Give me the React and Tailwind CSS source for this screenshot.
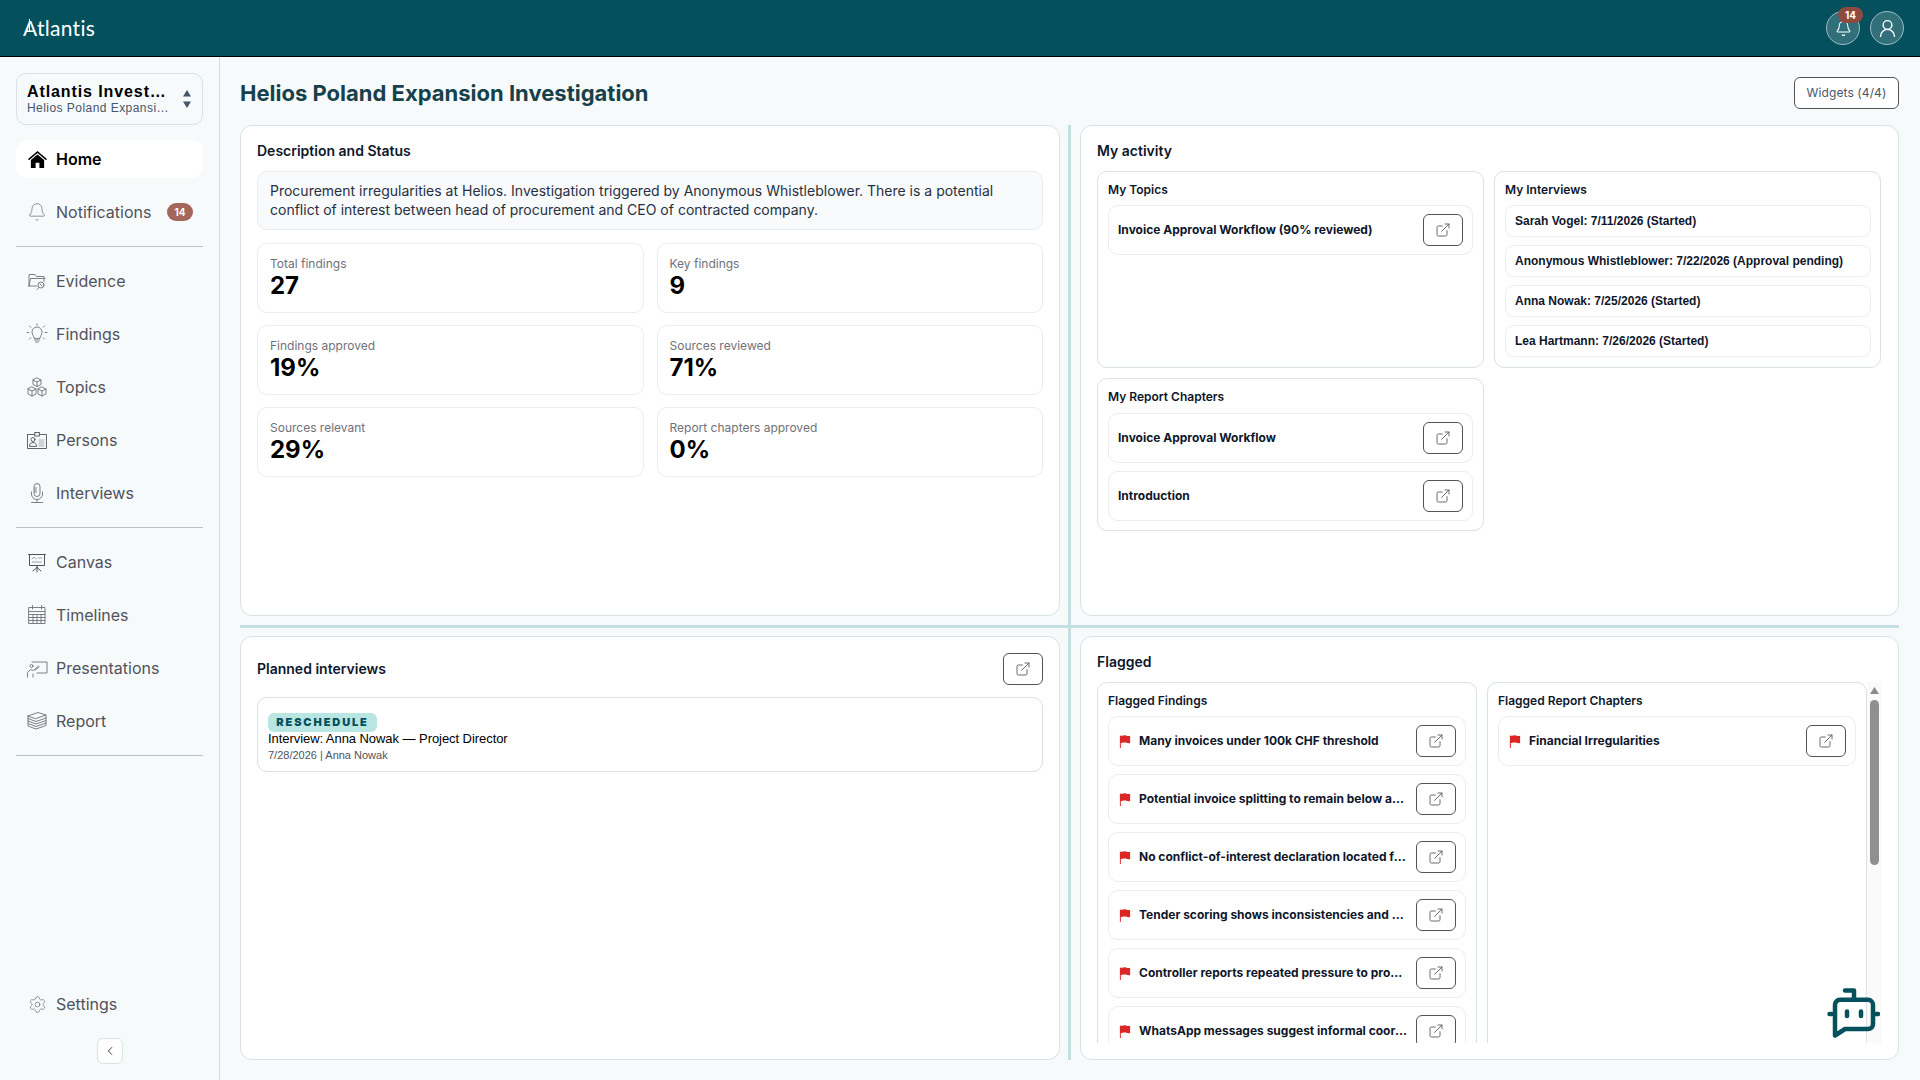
import React from 'react';
import { Bell, UserRound, ExternalLink, ChevronLeft, Settings } from 'lucide-react';

const Svg = ({ children }) => (
  <svg width="22" height="22" viewBox="0 0 22 22" fill="none" stroke="#71717a" strokeWidth="0.9" strokeLinecap="round" strokeLinejoin="round">
    {children}
  </svg>
);

const HomeIcon = () => (
  <svg width="19" height="17" viewBox="0 0 20 18" fill="#000">
    <path d="M10 0 L20 8.6 L19 9.8 L10 2.2 L1 9.8 L0 8.6 Z" />
    <path d="M10 3.6 L17 9.6 V18 H12 V12.5 H8 V18 H3 V9.6 Z" />
  </svg>
);

const EvidenceIcon = () => (
  <Svg>
    <path d="M3 16V4.5h6l1.5 2H18v5" />
    <path d="M3 16l1.5-7.5H19" />
    <path d="M3 16h8" />
    <circle cx="15" cy="15" r="3" />
    <path d="M13 17.5l-2 2" />
    <path d="M14 14l2 2" />
  </Svg>
);

const FindingsIcon = () => (
  <Svg>
    <path d="M8 15c0-2-2-3-2-6a5 5 0 0 1 10 0c0 3-2 4-2 6z" />
    <path d="M8.5 17h5M9.5 19h3" />
    <path d="M11 0.8v1.4M3.5 3l1.2 1.2M18.5 3l-1.2 1.2M1 9.5h1.8M19.2 9.5H21M3.5 16l1.2-1.2M18.5 16l-1.2-1.2" />
  </Svg>
);

const TopicsIcon = () => (
  <Svg>
    <path d="M11 2l4 2v4.5l-4 2-4-2V4z" />
    <path d="M7 4l4 2 4-2M11 6v4.5" />
    <path d="M6 11l4 2v5l-4 2-4-2v-5z" />
    <path d="M2 13l4 2 4-2M6 15v5" />
    <path d="M16 11l4 2v5l-4 2-4-2v-5z" />
    <path d="M12 13l4 2 4-2M16 15v5" />
  </Svg>
);

const PersonsIcon = () => (
  <svg width="22" height="22" viewBox="0 0 22 22" fill="none" stroke="#52525b" strokeWidth="0.9" strokeLinecap="round">
    <path d="M1.5 5.5h7M13.5 5.5h7V19.5h-19V5.5" />
    <rect x="8.8" y="3.5" width="4.5" height="3.5" />
    <circle cx="7" cy="10.5" r="2" />
    <path d="M3.5 17c0-2.5 1.500-3.500 3.500-3.500s3.500 1 3.500 3.500z" />
    <path d="M13 11h5M13 13h5M13 15h5M13 17h5" stroke="#a1a1aa" />
  </svg>
);

const MicIcon = () => (
  <Svg>
    <rect x="8" y="1.5" width="6" height="13" rx="3" />
    <path d="M8.5 6h2M8.5 8h2M8.5 10h2" />
    <path d="M5.5 10v2a5.500 5.500 0 0 0 11 0v-2" />
    <path d="M11 17.5V20M5.500 20.500h11" />
  </Svg>
);

const CanvasIcon = () => (
  <svg width="22" height="22" viewBox="0 0 22 22" fill="none" stroke="#52525b" strokeWidth="1" strokeLinecap="round">
    <path d="M2.5 3.500h17M3.500 3.500v11h15v-11" />
    <path d="M6 8l2-2 2 2M6.500 11h9M12 7h4" stroke="#a1a1aa" />
    <path d="M11 14.500v2M11 16.500l-4 3.500M11 16.500l4 3.500M11 16.500V21" />
  </svg>
);

const TimelinesIcon = () => (
  <Svg>
    <rect x="3" y="3.5" width="16" height="16" />
    <path d="M3 7.5h16M6.500 1.500v3.500M15.500 1.500v3.500" />
    <path d="M3 10.5h16M3 13.500h16M3 16.500h16M7 10.500v9M11 10.500v9M15 10.500v9" />
  </Svg>
);

const PresentationsIcon = () => (
  <Svg>
    <path d="M6 5h15v11H11" />
    <circle cx="5.5" cy="9" r="1.5" />
    <path d="M1.5 20v-4.500l3-3 3 1 5-4.500M7 17v3" />
    <path d="M9 13l4-3" />
  </Svg>
);

const ReportIcon = () => (
  <Svg>
    <path d="M2 6l10-3.500 8 2.500-10 3.500z" />
    <path d="M2 6v2.500l8 3 10-3.500V5" />
    <path d="M2 8.500V11l8 3 10-3.500V8" />
    <path d="M2 11v2.500l8 3 10-3.500v-2.500" />
    <path d="M2 13.500V16l8 3 10-3.500V13" />
  </Svg>
);

const BotIcon = () => (
  <svg width="53" height="50" viewBox="0 0 53 50" fill="none" stroke="#04505d" strokeWidth="4.5" strokeLinecap="round" strokeLinejoin="round">
    <path d="M13 11.8H41a5 5 0 0 1 5 5V36a5 5 0 0 1-5 5H18L8 47.5V17a5 5 0 0 1 5-5.200z" />
    <path d="M18 2.500h9v9" />
    <path d="M20 23.500V28M34 23.500V28" />
    <path d="M2.500 26H5M48.500 26H51" />
  </svg>
);

const FlagIcon = () => (
  <svg width="12" height="13" viewBox="0 0 12 14" className="shrink-0">
    <path d="M0.500 0.500C3 1.500 5 0 7 0.500s3 1 4.500 0.300V8.500C9 9.300 7.500 8 5.500 8S2.500 8.500 1.500 8.500V14H0.500z" fill="#dc2626" />
  </svg>
);

const nav1 = [
  { label: 'Evidence', icon: <EvidenceIcon /> },
  { label: 'Findings', icon: <FindingsIcon /> },
  { label: 'Topics', icon: <TopicsIcon /> },
  { label: 'Persons', icon: <PersonsIcon /> },
  { label: 'Interviews', icon: <MicIcon /> },
];

const nav2 = [
  { label: 'Canvas', icon: <CanvasIcon /> },
  { label: 'Timelines', icon: <TimelinesIcon /> },
  { label: 'Presentations', icon: <PresentationsIcon /> },
  { label: 'Report', icon: <ReportIcon /> },
];

const stats = [
  ['Total findings', '27'],
  ['Key findings', '9'],
  ['Findings approved', '19%'],
  ['Sources reviewed', '71%'],
  ['Sources relevant', '29%'],
  ['Report chapters approved', '0%'],
];

const interviews = [
  'Sarah Vogel: 7/11/2026 (Started)',
  'Anonymous Whistleblower: 7/22/2026 (Approval pending)',
  'Anna Nowak: 7/25/2026 (Started)',
  'Lea Hartmann: 7/26/2026 (Started)',
];

const flagged = [
  'Many invoices under 100k CHF threshold',
  'Potential invoice splitting to remain below approval limits',
  'No conflict-of-interest declaration located for head of procurement',
  'Tender scoring shows inconsistencies and missing documentation',
  'Controller reports repeated pressure to process invoices',
  'WhatsApp messages suggest informal coordination',
];

const NavItem = ({ icon, label, badge }) => (
  <div className="h-[38px] flex items-center pl-[10px] pr-[10px] gap-[8px] text-[16px] text-[#52525b]">
    <span className="w-[22px] h-[22px] flex items-center justify-center shrink-0">{icon}</span>
    <span>{label}</span>
    {badge && (
      <span className="ml-auto w-[26px] h-[18px] rounded-full bg-[#a5675c] text-white text-[10px] font-bold flex items-center justify-center">{badge}</span>
    )}
  </div>
);

const OpenButton = () => (
  <button className="w-10 h-8 shrink-0 rounded-md border border-[#52525b] bg-white flex items-center justify-center text-[#5f5f68]">
    <ExternalLink size={16} strokeWidth={1.4} />
  </button>
);

const Panel = ({ children, className }) => (
  <section className={`bg-white rounded-xl border border-[#d9e2e6] ${className}`}>{children}</section>
);

const Row = ({ children, className = 'pl-[9px]' }) => (
  <div className={`h-[50px] shrink-0 rounded-[10px] border border-[#e8edf0] pr-[9px] flex items-center justify-between gap-[7px] text-[12px] font-bold text-[#0f172a] ${className}`}>
    {children}
  </div>
);

const SubBox = ({ title, children, className, titleClass = 'mb-[7px]' }) => (
  <div className={`rounded-[10px] border border-[#d9e2e6] px-[10px] pt-[10px] pb-[9px] ${className}`}>
    <h3 className={`text-[12px] leading-[16px] font-semibold text-[#0f172a] ${titleClass}`}>{title}</h3>
    <div className="flex flex-col gap-2">{children}</div>
  </div>
);

export default function App() {
  return (
    <div className="w-[1920px] h-[1080px] overflow-hidden bg-[#f6fafb] font-['Inter',sans-serif] flex flex-col">
      {/* Header */}
      <header className="h-[57px] shrink-0 bg-[#04505d] border-b border-black flex items-center justify-between pl-[23px] pr-[16px]">
        <span className="relative text-white text-[21px] font-['Lato',sans-serif] font-normal tracking-[0.3px]">
          Atlantis
          <span className="absolute left-[6px] top-[7px] w-px h-[13px] bg-white" />
        </span>
        <div className="flex items-center gap-[10px]">
          <div className="relative w-[34px] h-[34px] rounded-full bg-[#316f7a] border border-[#9dbcc2] flex items-center justify-center text-white">
            <Bell size={17} strokeWidth={1.5} />
            <span className="absolute -top-[5px] left-[11px] w-[25px] h-[16px] rounded-full bg-[#8f4a3e] text-white text-[10px] font-bold flex items-center justify-center">14</span>
          </div>
          <div className="w-[34px] h-[34px] rounded-full bg-[#316f7a] border border-[#9dbcc2] flex items-center justify-center text-white">
            <UserRound size={21} strokeWidth={1.6} />
          </div>
        </div>
      </header>

      <div className="flex-1 flex min-h-0">
        {/* Sidebar */}
        <aside className="w-[220px] shrink-0 border-r border-[#d5dcdf] bg-[#f6fafb] flex flex-col px-4 pt-4 pb-4">
          <div className="h-[52px] rounded-[10px] border border-[#d9e2e6] pl-[10px] pr-[11px] flex items-center justify-between">
            <div className="w-[144px] font-['Liberation_Sans',sans-serif]">
              <div className="text-[16px] leading-[18px] font-bold text-black tracking-[0.9px] truncate">Atlantis Investigations</div>
              <div className="text-[12px] leading-[14px] text-[#475569] tracking-[0.45px] truncate">Helios Poland Expansion Investigation</div>
            </div>
            <svg width="8" height="18" viewBox="0 0 8 18" fill="#475569">
              <path d="M4 0L8 6.500H0z" />
              <path d="M0 11.500H8L4 18z" />
            </svg>
          </div>

          <div className="mt-[15px] h-[38px] rounded-[10px] bg-white flex items-center pl-[10px] gap-[8px] text-[16px] font-semibold text-black">
            <span className="w-[22px] flex justify-center"><HomeIcon /></span>
            <span>Home</span>
          </div>
          <div className="mt-[15px]"><NavItem icon={<Bell size={20} strokeWidth={0.9} color="#71717a" />} label="Notifications" badge="14" /></div>

          <div className="h-px bg-[#b9c2c6] mt-[15px] mb-[15px]" />
          <div className="flex flex-col gap-[15px]">
            {nav1.map((n) => <NavItem key={n.label} icon={n.icon} label={n.label} />)}
          </div>

          <div className="h-px bg-[#b9c2c6] mt-[15px] mb-[15px]" />
          <div className="flex flex-col gap-[15px]">
            {nav2.map((n) => <NavItem key={n.label} icon={n.icon} label={n.label} />)}
          </div>
          <div className="h-px bg-[#b9c2c6] mt-[15px]" />

          <div className="mt-auto">
            <NavItem icon={<Settings size={19} strokeWidth={0.9} color="#71717a" />} label="Settings" />
            <div className="flex justify-center mt-[15px]">
              <button className="w-[26px] h-[26px] rounded-md border border-[#d9e2e6] bg-white flex items-center justify-center text-[#27272a]">
                <ChevronLeft size={14} strokeWidth={1.5} />
              </button>
            </div>
          </div>
        </aside>

        {/* Main */}
        <main className="flex-1 min-w-0 pl-[20px] pr-[21px] pt-[20px]">
          <div className="h-[32px] flex items-center justify-between mb-[16px]">
            <h1 className="text-[22px] font-bold text-[#17414a]">Helios Poland Expansion Investigation</h1>
            <button className="w-[105px] h-[32px] rounded-md border border-[#52525b] bg-white text-[12px] tracking-[0.1px] text-[#475569]">Widgets (4/4)</button>
          </div>

          <div className="grid grid-cols-[820px_20px_819px] grid-rows-[491px_20px_424px]">
            {/* Splitters */}
            <div className="col-start-2 row-start-1 row-span-3 flex justify-center">
              <div className="w-[3px] bg-[#c5e0e4] mr-[2px]" />
            </div>
            <div className="col-start-1 col-span-3 row-start-2 flex items-center">
              <div className="w-full h-[3px] bg-[#c5e0e4]" />
            </div>

            {/* Description */}
            <Panel className="col-start-1 row-start-1 px-4 pt-[15px]">
              <h2 className="text-[14px] leading-[20px] font-semibold text-[#0f172a] mb-[10px]">Description and Status</h2>
              <div className="h-[59px] rounded-[10px] border border-[#e8edf0] bg-[#f8fafc] px-[12px] pt-[9px] text-[14px] leading-[19px] text-[#27303f]">
                Procurement irregularities at Helios. Investigation triggered by Anonymous Whistleblower. There is a potential conflict of interest between head of procurement and CEO of contracted company.
              </div>
              <div className="grid grid-cols-2 gap-x-[13px] gap-y-[12px] mt-[13px]">
                {stats.map(([label, value]) => (
                  <div key={label} className="h-[70px] rounded-[10px] border border-[#e8edf0] px-[12px] pt-[10px]">
                    <div className="text-[12px] leading-[19px] text-[#71717a]">{label}</div>
                    <div className="text-[24px] leading-[26px] font-bold text-black">{value}</div>
                  </div>
                ))}
              </div>
            </Panel>

            {/* My activity */}
            <Panel className="col-start-3 row-start-1 px-4 pt-[15px]">
              <h2 className="text-[14px] leading-[20px] font-semibold text-[#0f172a] mb-[10px]">My activity</h2>
              <div className="grid grid-cols-[387px_387px] gap-x-[10px] items-start">
                <div className="flex flex-col gap-[10px]">
                  <SubBox title="My Topics" className="h-[197px]">
                    <Row>
                      <span>Invoice Approval Workflow (90% reviewed)</span>
                      <OpenButton />
                    </Row>
                  </SubBox>
                  <SubBox title="My Report Chapters" titleClass="mb-[8px]">
                    <Row><span>Invoice Approval Workflow</span><OpenButton /></Row>
                    <Row><span>Introduction</span><OpenButton /></Row>
                  </SubBox>
                </div>
                <SubBox title="My Interviews" className="h-[197px] pr-[9px]">
                  {interviews.map((t) => (
                    <div key={t} className="h-[32px] rounded-lg border border-[#e8edf0] pl-[9px] flex items-center text-[12px] font-bold text-[#0f172a] font-['Liberation_Sans',sans-serif]">{t}</div>
                  ))}
                </SubBox>
              </div>
            </Panel>

            {/* Planned interviews */}
            <Panel className="col-start-1 row-start-3 p-4">
              <div className="flex items-center justify-between mb-[12px]">
                <h2 className="text-[14px] font-semibold text-[#0f172a] pb-[1px]">Planned interviews</h2>
                <OpenButton />
              </div>
              <div className="h-[75px] rounded-[10px] border border-[#d9e2e6] pl-[10px] pt-[15px]">
                <span className="block w-[109px] h-[19px] rounded-md bg-[#b9e6e3] text-center text-[11px] leading-[19px] font-black tracking-[1.9px] text-[#04505d]">RESCHEDULE</span>
                <div className="text-[13px] leading-[14px] tracking-[-0.06px] text-black font-['Liberation_Sans',sans-serif]">Interview: Anna Nowak — Project Director</div>
                <div className="text-[11px] leading-[18px] text-[#52525b] font-['Liberation_Sans',sans-serif]">7/28/2026 | Anna Nowak</div>
              </div>
            </Panel>

            {/* Flagged */}
            <Panel className="col-start-3 row-start-3 relative pl-4 pt-[15px] pr-[31px]">
              <h2 className="text-[14px] leading-[20px] font-semibold text-[#0f172a] mb-[10px]">Flagged</h2>
              <div className="h-[361px] overflow-hidden">
                <div className="grid grid-cols-[380px_380px] gap-x-[10px] items-start">
                  <SubBox title="Flagged Findings">
                    {flagged.map((t) => (
                      <Row key={t} className="pl-[10px]">
                        <FlagIcon />
                        <span className="flex-1 min-w-0 truncate ml-[1px]">{t}</span>
                        <OpenButton />
                      </Row>
                    ))}
                  </SubBox>
                  <SubBox title="Flagged Report Chapters" className="h-[500px]">
                    <Row className="pl-[10px]">
                      <FlagIcon />
                      <span className="flex-1 min-w-0 truncate ml-[1px]">Financial Irregularities</span>
                      <OpenButton />
                    </Row>
                  </SubBox>
                </div>
              </div>
              {/* scrollbar */}
              <div className="absolute right-[16px] top-[45px] w-[15px] h-[361px] flex flex-col items-center bg-[#fafafa] pt-[5px]">
                <svg width="9" height="7" viewBox="0 0 9 7" fill="#8a8a8a"><path d="M4.500 0L9 7H0z" /></svg>
                <div className="w-[9px] h-[165px] mt-[6px] rounded-full bg-[#909090]" />
              </div>
              <div className="absolute right-[18px] bottom-[21px]"><BotIcon /></div>
            </Panel>
          </div>
        </main>
      </div>
    </div>
  );
}
